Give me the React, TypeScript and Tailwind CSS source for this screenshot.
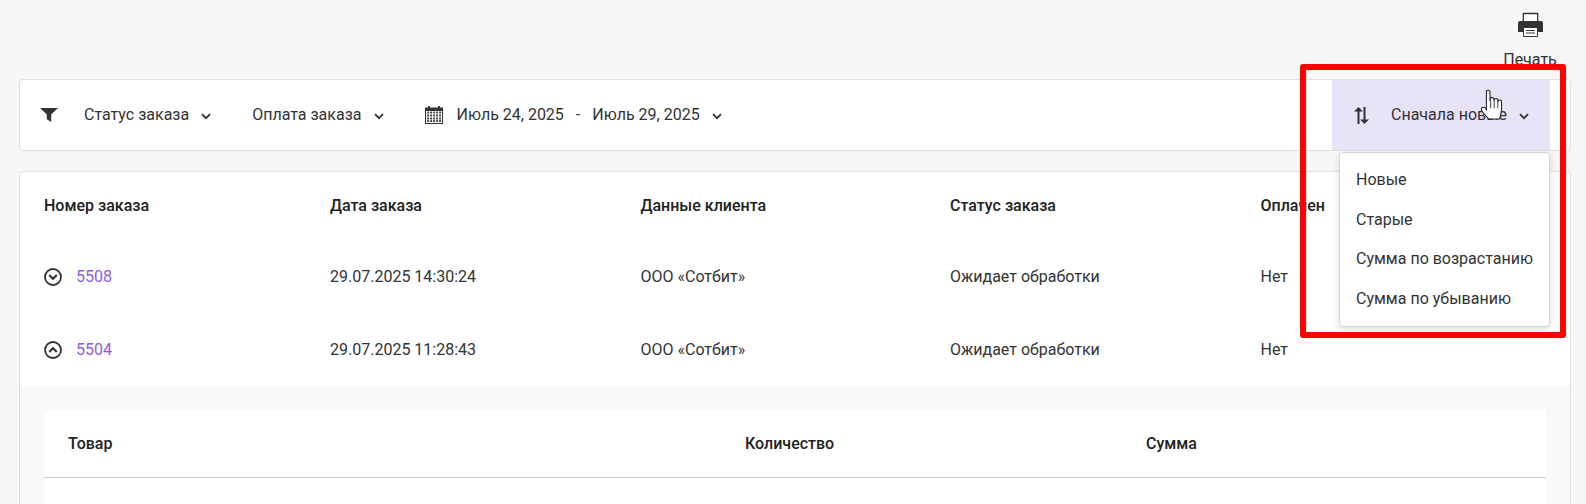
import React from "react";

const Chevron = ({ className = "" }: { className?: string }) => (
  <svg width="10" height="7" viewBox="0 0 10 7" fill="none" className={className}>
    <path d="M1 1.200 5 5.200 9 1.200" stroke="#333" strokeWidth="1.800" />
  </svg>
);

const CircleChevron = ({ up }: { up?: boolean }) => (
  <svg width="18" height="18" viewBox="0 0 18 18" fill="none" className="shrink-0">
    <circle cx="9" cy="9" r="8" stroke="#333" strokeWidth="1.800" />
    <path d={up ? "M5.200 11 9 7.200l3.800 3.800" : "M5.200 7 9 10.800 12.800 7"} stroke="#333" strokeWidth="2.200" />
  </svg>
);

const Funnel = () => (
  <svg width="18" height="14" viewBox="0 0 18 14" className="mr-[26px] shrink-0">
    <path d="M0 0h18l-6.800 6.600V14L6.800 11.200V6.600z" fill="#333" />
  </svg>
);

const Calendar = () => (
  <svg width="18" height="18" viewBox="0 0 18 18" className="shrink-0">
    <path d="M0 1.500h3V0h2v1.500h8V0h2v1.500h3V18H0z" fill="#333" />
    <rect x="1" y="5" width="16" height="12" fill="#fff" />
    {[6.5, 9.5, 12.5, 15].map((y) => (
      <g key={y}>
        {[3, 6, 9, 12, 15].map((x) => (
          <rect key={x} x={x - 0.9} y={y - 0.9} width="1.900" height="1.900" fill="#444" />
        ))}
      </g>
    ))}
  </svg>
);

const Printer = () => (
  <svg width="25" height="25" viewBox="0 0 25 25" className="shrink-0">
    <path d="M3.500 0.500h18V10h-18z" fill="#fff" stroke="#333" strokeWidth="1.600" transform="translate(2.500 1) scale(0.8 1)" />
    <path d="M2 9h21a2 2 0 0 1 2 2v9h-5v-4H5v4H0v-9a2 2 0 0 1 2-2z" fill="#333" />
    <path d="M5.500 15.500h14v9h-14z" fill="#fff" stroke="#333" />
    <path d="M8 18.500h9M8 21h9" stroke="#333" strokeWidth="1.200" />
  </svg>
);

const SortIcon = () => (
  <svg width="15" height="17" viewBox="0 0 15 17" className="shrink-0">
    <path d="M3.500 17V4.500H0L4.500 0 9 4.500H5.500V17z" fill="#333" />
    <path d="M9.500 0h2v12.500H15L10.500 17 6 12.500h3.500z" fill="#333" />
  </svg>
);

const Hand = () => (
  <svg width="24" height="36" viewBox="0 0 20 30" className="absolute left-[1481px] top-[89px] z-30">
    <path
      d="M4.500 2.200c0-1.600 3-1.600 3 0V10l.3-2.200c.3-.9 2.700-.9 2.900.3l.2 1.700.4-1.400c.4-.8 2.400-.7 2.600.4l.2 1.700.5-1c.5-.6 2.300-.4 2.400.7.300 3 .300 6.500-.200 9.300L15.500 25H6.500L1.500 19.500C.2 18-.3 16 1.500 15.300c.9-.4 2 .2 3 1.700z"
      fill="#fff"
      stroke="#222"
      strokeWidth="0.900"
    />
    <path d="M8 9v7M11 9v7M14 10v6" stroke="#555" strokeWidth="0.900" />
  </svg>
);

const FilterItem = ({ label }: { label: string }) => (
  <div className="flex items-center gap-[12px]">
    <span>{label}</span>
    <Chevron className="mt-[2px]" />
  </div>
);

const rows = [
  { id: "5508", date: "29.07.2025 14:30:24", up: false },
  { id: "5504", date: "29.07.2025 11:28:43", up: true },
];

const Row = ({ id, date, up }: { id: string; date: string; up: boolean }) => (
  <div className="grid h-[73px] grid-cols-[286px_310.500px_309.500px_310.500px_1fr] items-center pl-[24px] text-[16px] leading-[24px] text-[#333]">
    <div className="flex items-center gap-[14px]">
      <CircleChevron up={up} />
      <span className="text-[#8b5ce6]">{id}</span>
    </div>
    <div>{date}</div>
    <div>ООО «Сотбит»</div>
    <div>Ожидает обработки</div>
    <div>Нет</div>
  </div>
);

export default function App() {
  return (
    <div className="relative h-[504px] w-[1586px] overflow-hidden bg-[#f7f7f7] font-['Roboto',sans-serif] text-[16px] text-[#333]">
      <header className="flex h-[79px] justify-end pr-[29px] pt-[12px]">
        <div className="flex w-[54px] flex-col items-center">
          <Printer />
          <span className="mt-[11px] text-[16px] leading-[24px]">Печать</span>
        </div>
      </header>

      <section className="mx-[19px] flex h-[72px] w-[1552px] items-center justify-between rounded-[4px] border border-[#e0e0e0] bg-white pl-[20px] pr-[20px]">
        <div className="flex items-center">
          <Funnel />
          <div className="mr-[41px]"><FilterItem label="Статус заказа" /></div>
          <div className="mr-[41px]"><FilterItem label="Оплата заказа" /></div>
          <Calendar />
          <div className="ml-[14px] flex items-center">
            <span>Июль 24, 2025</span>
            <span className="mx-[12px]">-</span>
            <span>Июль 29, 2025</span>
            <Chevron className="ml-[12px] mt-[2px]" />
          </div>
        </div>
        <div className="flex h-[70px] w-[218px] items-center bg-[#e9e3f8] pl-[22px]">
          <SortIcon />
          <span className="ml-[22px]">Сначала новые</span>
          <Chevron className="ml-[12px] mt-[2px]" />
        </div>
      </section>

      <section className="mx-[19px] mt-[20px] h-[400px] w-[1552px] rounded-[4px] border border-[#e0e0e0] bg-white">
        <div className="grid h-[68px] grid-cols-[286px_310.500px_309.500px_310.500px_1fr] items-center pl-[24px] text-[16px] font-medium leading-[24px] text-[#212121]">
          <div>Номер заказа</div>
          <div>Дата заказа</div>
          <div>Данные клиента</div>
          <div>Статус заказа</div>
          <div>Оплачен</div>
        </div>
        {rows.map((r) => (
          <Row key={r.id} {...r} />
        ))}
        <div className="h-[200px] bg-[#f9f9f9] px-[24px] pt-[24px]">
          <div className="h-[200px] w-[1502px] bg-white">
            <div className="grid h-[68px] grid-cols-[677px_401px_1fr] items-center border-b border-[#cccccc] pl-[24px] text-[16px] font-medium leading-[24px] text-[#212121]">
              <div>Товар</div>
              <div>Количество</div>
              <div>Сумма</div>
            </div>
          </div>
        </div>
      </section>

      <div className="absolute left-[1339px] top-[152px] z-10 flex h-[175px] w-[211px] flex-col rounded-[4px] border border-[#d5d5d5] bg-white pl-[16px] pt-[7px] shadow-[0_2px_6px_rgba(0,0,0,0.15)]">
        {["Новые", "Старые", "Сумма по возрастанию", "Сумма по убыванию"].map((t) => (
          <div key={t} className="flex h-[39.700px] items-center">{t}</div>
        ))}
      </div>

      <div className="pointer-events-none absolute left-[1300px] top-[64px] z-20 h-[274px] w-[266px] rounded-[3px] border-[6px] border-[#ff0000]" />
      <Hand />
    </div>
  );
}
